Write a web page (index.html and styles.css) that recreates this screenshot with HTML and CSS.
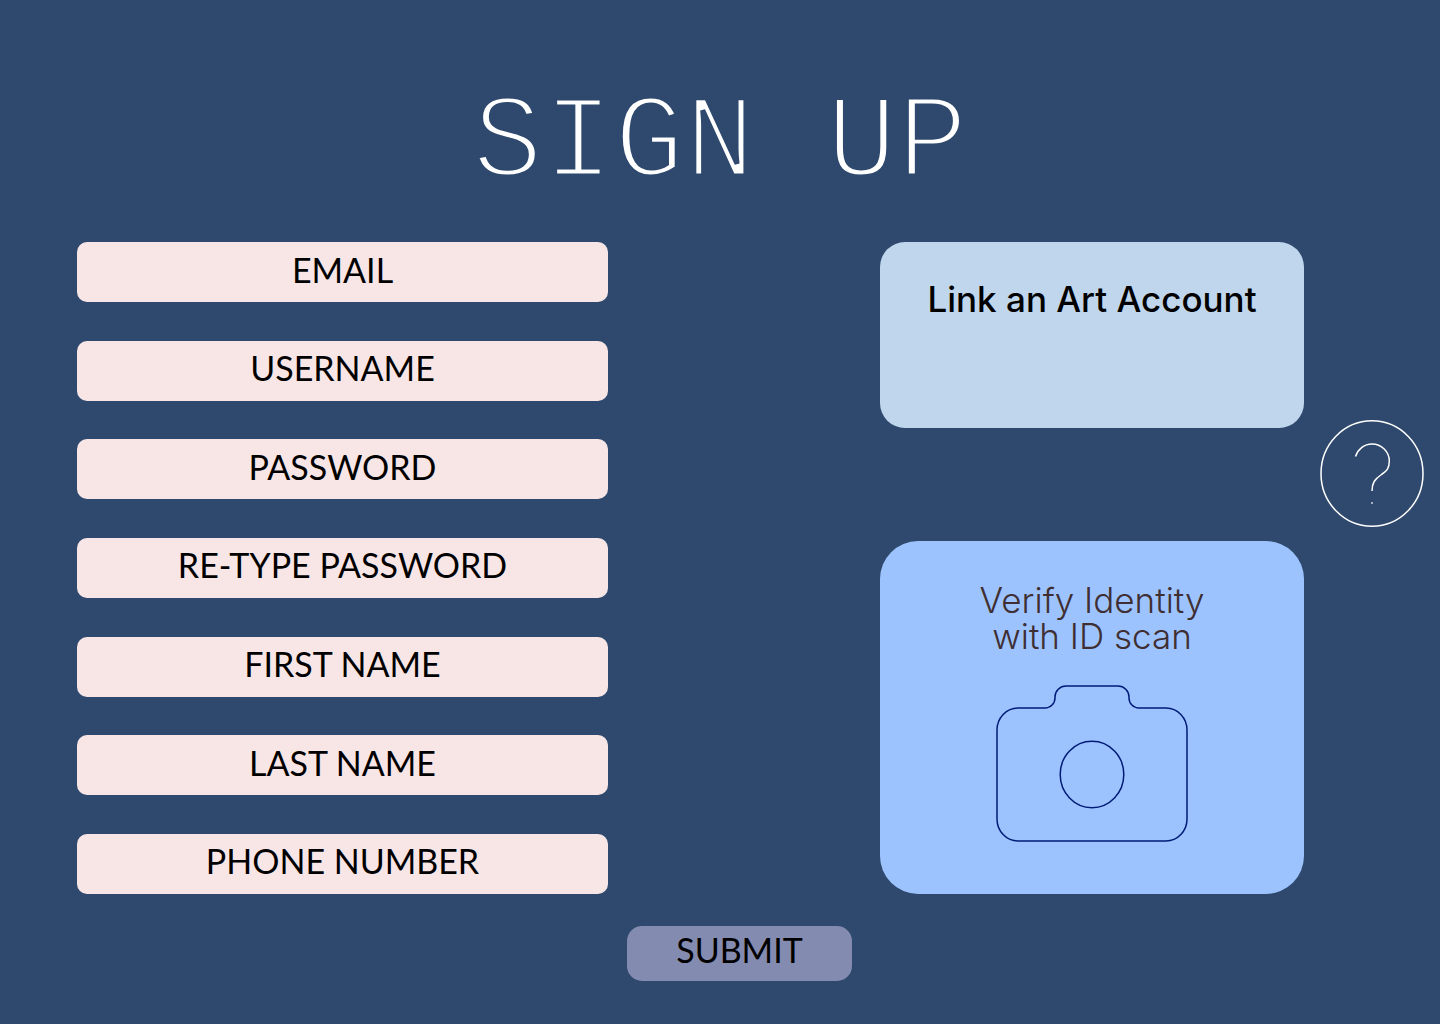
FILE: index.html
```html
<!DOCTYPE html>
<html lang="en">
<head>
<meta charset="utf-8">
<meta name="viewport" content="width=device-width, initial-scale=1">
<title>Sign Up</title>
<link rel="stylesheet" href="styles.css">
</head>
<body>
<main class="page">
  <h1 class="title">SIGN UP</h1>
  <form class="signup">
    <div class="columns">
      <div class="fields">
        <input class="field" type="text" aria-label="Email" placeholder="EMAIL">
        <input class="field" type="text" aria-label="Username" placeholder="USERNAME">
        <input class="field" type="password" aria-label="Password" placeholder="PASSWORD">
        <input class="field" type="password" aria-label="Re-type password" placeholder="RE-TYPE PASSWORD">
        <input class="field" type="text" aria-label="First name" placeholder="FIRST NAME">
        <input class="field" type="text" aria-label="Last name" placeholder="LAST NAME">
        <input class="field" type="tel" aria-label="Phone number" placeholder="PHONE NUMBER">
      </div>
      <div class="cards">
        <button class="card card-link" type="button">Link an Art Account</button>
        <button class="card card-verify" type="button">
          <span>Verify Identity<br>with ID scan</span>
          <svg class="camera" viewBox="0 0 192 157" aria-hidden="true">
            <path d="M22 23H49A10 10 0 0 0 59 13V12A11 11 0 0 1 70 1H122A11 11 0 0 1 133 12V13A10 10 0 0 0 143 23H170A21 22 0 0 1 191 45V134A21 22 0 0 1 170 156H22A21 22 0 0 1 1 134V45A21 22 0 0 1 22 23Z"/>
            <ellipse cx="96" cy="89.500" rx="31.800" ry="33.200"/>
          </svg>
        </button>
      </div>
      <button class="help" type="button" aria-label="Help">
        <svg class="help-icon" viewBox="0 0 104 108" aria-hidden="true">
          <ellipse cx="52" cy="53.500" rx="51" ry="52.700"/>
          <path d="M35.500 36.500C38 29 44.500 24 52 24C61.500 24 69.300 31.500 69.300 41C69.300 48 67 51 61.500 54.500C55 59 52 62.500 52 71M52 82.200V83.800"/>
        </svg>
      </button>
    </div>
    <div class="actions">
      <button class="submit" type="submit">SUBMIT</button>
    </div>
  </form>
</main>
</body>
</html>
```
FILE: styles.css
```css
* {
  box-sizing: border-box;
}

body {
  margin: 0;
  min-height: 100vh;
  background: #2e496d;
  color: #000;
  font-family: Lato, "Open Sans", sans-serif;
  font-size: 34px;
}

button,
input {
  margin: 0;
  border: 0;
  color: inherit;
  font: inherit;
}

button {
  cursor: pointer;
}

.page {
  padding: 80px 0 40px;
}

.title {
  margin: 0 0 32px;
  color: #fff;
  font-family: "Liberation Mono", monospace;
  font-size: 118px;
  font-weight: 400;
  line-height: 130px;
  text-align: center;
  -webkit-text-stroke: 5px #2e496d;
}

.columns {
  display: grid;
  grid-template-columns: 531fr 272fr 424fr 16px 104px;
  padding: 0 16px 0 77px;
}

.fields {
  display: flex;
  grid-column: 1;
  flex-direction: column;
  justify-content: space-between;
}

.field {
  width: 100%;
  height: 60px;
  padding: 0 16px 6px;
  border-radius: 10px;
  background: #f8e6e6;
  text-align: center;
}

.field::placeholder {
  color: #000;
  opacity: 1;
}

.cards {
  display: flex;
  grid-column: 3;
  flex-direction: column;
  gap: 113px;
}

.card {
  display: flex;
  flex-direction: column;
  align-items: center;
  width: 100%;
  font-family: Inter, sans-serif;
  font-size: 35px;
  line-height: 36px;
}

.card-link {
  min-height: 186px;
  padding: 39px 16px;
  border-radius: 25px;
  background: #bfd6ec;
  font-weight: 500;
}

.card-verify {
  gap: 31px;
  min-height: 353px;
  padding: 41px 16px 52px;
  border-radius: 38px;
  background: #9dc3ff;
  color: #3f2f33;
  font-weight: 300;
}

.camera {
  width: 192px;
  height: 157px;
  fill: none;
  stroke: #001c77;
  stroke-width: 1.5;
}

.help {
  grid-column: 5;
  align-self: start;
  margin-top: 178px;
  padding: 0;
  background: none;
}

.help-icon {
  display: block;
  width: 104px;
  height: 108px;
  fill: none;
  stroke: #fff;
  stroke-width: 1.5;
}

.actions {
  display: flex;
  justify-content: center;
  padding: 32px 0 0 39px;
}

.submit {
  width: 225px;
  height: 55px;
  padding: 0 16px 8px;
  border-radius: 15px;
  background: #848bb0;
}
```
